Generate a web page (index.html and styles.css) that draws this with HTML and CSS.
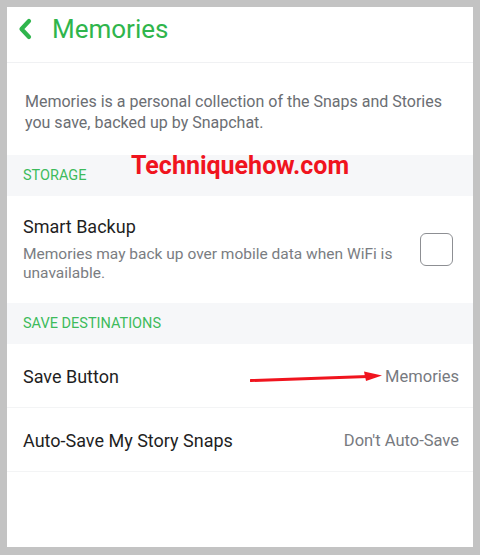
FILE: index.html
```html
<!DOCTYPE html>
<html lang="en">
<head>
    <meta charset="UTF-8">
    <meta name="viewport" content="width=device-width, initial-scale=1.0">
    <title>Memories</title>
    <link rel="stylesheet" href="styles.css">
</head>
<body>
    <div class="screen">
        <div class="top-bar">
            <svg class="back-icon" width="16" height="22" viewBox="0 0 16 22">
                <path d="M11 3 L3.5 11 L11 19" fill="none" stroke="#2fb54c" stroke-width="4.2" stroke-linecap="round" stroke-linejoin="round"/>
            </svg>
            <div class="title">Memories</div>
        </div>

        <div class="intro">
            Memories is a personal collection of the Snaps and Stories you save, backed up by Snapchat.
        </div>

        <div class="section-header">STORAGE</div>
        <div class="row row-tall">
            <div class="row-text">
                <div class="row-title">Smart Backup</div>
                <div class="row-sub">Memories may back up over mobile data when WiFi is unavailable.</div>
            </div>
            <div class="checkbox"></div>
        </div>

        <div class="section-header">SAVE DESTINATIONS</div>
        <div class="row">
            <div class="row-title">Save Button</div>
            <div class="row-value">Memories</div>
        </div>
        <div class="row">
            <div class="row-title">Auto-Save My Story Snaps</div>
            <div class="row-value">Don't Auto-Save</div>
        </div>

        <div class="watermark">Techniquehow.com</div>
        <svg class="arrow" width="140" height="14" viewBox="0 0 140 14">
            <path d="M1 9.5 L118 5.5" stroke="#f0141e" stroke-width="3" stroke-linecap="round"/>
            <path d="M132 4.5 L114 0.5 L116 10 Z" fill="#f0141e"/>
        </svg>
    </div>
</body>
</html>
```

FILE: styles.css
```css
* {
    margin: 0;
    padding: 0;
    box-sizing: border-box;
    font-family: 'Roboto', 'Liberation Sans', sans-serif;
}

body {
    background-color: #c3c3c3;
    padding: 7px;
}

.screen {
    position: relative;
    height: 540px;
    background-color: white;
}

.top-bar {
    display: flex;
    align-items: center;
    height: 56px;
    padding: 0 0 12px 11px;
    border-bottom: 1px solid #f0f1f3;
}

.back-icon {
    margin-right: 18px;
}

.title {
    font-size: 26px;
    color: #2fb54c;
}

.intro {
    height: 92px;
    padding: 28px 16px 0 18px;
    font-size: 16px;
    line-height: 21px;
    color: #6b6e73;
}

.section-header {
    height: 41px;
    display: flex;
    align-items: center;
    padding-left: 16px;
    background-color: #f6f7f9;
    color: #3dbb5c;
    font-size: 14.5px;
}

.row {
    display: flex;
    align-items: center;
    justify-content: space-between;
    height: 64px;
    padding: 2px 14px 0 16px;
    border-bottom: 1px solid #f3f4f5;
}

.row-tall {
    height: 107px;
    border-bottom: none;
    padding: 0 20px 0 16px;
}

.row-title {
    font-size: 18px;
    color: #1f1f1f;
}

.row-tall .row-title {
    margin-bottom: 8px;
}

.row-sub {
    width: 390px;
    font-size: 15.5px;
    line-height: 19px;
    color: #7a7d82;
}

.row-value {
    font-size: 16.5px;
    color: #777a7f;
}

.checkbox {
    width: 33px;
    height: 33px;
    border: 1.5px solid #8d8f93;
    border-radius: 6px;
}

/* 水印和箭头 */
.watermark {
    position: absolute;
    top: 144px;
    left: 124px;
    font-size: 25px;
    font-weight: bold;
    color: #f0141e;
}

.arrow {
    position: absolute;
    top: 364px;
    left: 243px;
}
```
